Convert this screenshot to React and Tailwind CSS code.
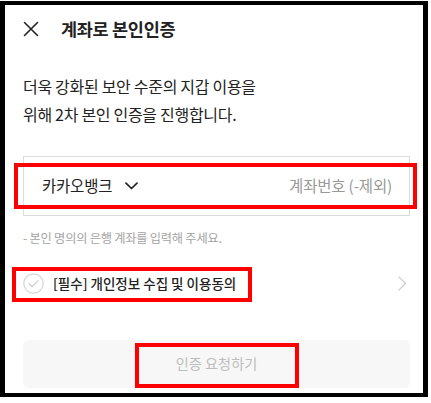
const font = { fontFamily: '"Noto Sans CJK KR", "Noto Sans", sans-serif' }

function CloseIcon() {
  return (
    <svg width="16" height="16" viewBox="0 0 16 16" fill="none" aria-hidden="true">
      <path d="M1.5 1.5 L14.5 14.5 M14.5 1.5 L1.5 14.5" stroke="#222" strokeWidth="1.6" strokeLinecap="round" />
    </svg>
  )
}

function ChevronDown() {
  return (
    <svg width="13" height="8" viewBox="0 0 13 8" fill="none" aria-hidden="true">
      <path d="M1 1.2 L6.5 6.5 L12 1.2" stroke="#222" strokeWidth="1.7" strokeLinecap="round" strokeLinejoin="round" />
    </svg>
  )
}

function CheckCircle() {
  return (
    <svg width="21" height="21" viewBox="0 0 21 21" fill="none" aria-hidden="true">
      <circle cx="10.5" cy="10.5" r="9.7" stroke="#d6d6d6" strokeWidth="1.2" />
      <path d="M6 10.8 L9.2 13.8 L15 7.6" stroke="#d0d0d0" strokeWidth="1.3" strokeLinecap="round" strokeLinejoin="round" />
    </svg>
  )
}

function ChevronRight() {
  return (
    <svg width="9" height="15" viewBox="0 0 9 15" fill="none" aria-hidden="true">
      <path d="M1 1 L7.5 7.5 L1 14" stroke="#cfcfcf" strokeWidth="1.3" strokeLinecap="round" strokeLinejoin="round" />
    </svg>
  )
}

export default function App() {
  return (
    <div className="h-[403px] w-[431px] bg-white pt-px" style={font}>
      <div className="relative h-[396px] w-[428px] border-y-4 border-x-[5px] border-black bg-white pl-[18px] pr-[13px]">
        {/* 헤더 */}
        <div className="flex h-[48px] items-center">
          <CloseIcon />
          <h1 className="ml-[22px] text-[17.5px] font-bold tracking-[-0.3px] text-[#222]">계좌로 본인인증</h1>
        </div>

        <p className="mt-[19px] text-[16px] leading-[28px] tracking-[-0.3px] text-[#222]">
          더욱 강화된 보안 수준의 지갑 이용을
          <br />
          위해 2차 본인 인증을 진행합니다.
        </p>

        {/* 계좌 입력 */}
        <div className="mt-[28px] flex h-[60px] items-center justify-between border border-[#dcdcdc] pl-[18px] pr-[17px]">
          <div className="flex items-center gap-[13px]">
            <span className="text-[15.5px] tracking-[-0.2px] text-[#222]">카카오뱅크</span>
            <ChevronDown />
          </div>
          <span className="text-[15.5px] tracking-[-0.2px] text-[#999]">계좌번호 (-제외)</span>
        </div>

        <p className="mt-[14px] text-[12.2px] leading-[16px] tracking-[-0.2px] text-[#a3a3a3]">- 본인 명의의 은행 계좌를 입력해 주세요.</p>

        {/* 약관 동의 */}
        <div className="mt-[27px] flex h-[20px] items-center justify-between pr-[3px]">
          <div className="flex items-center gap-[9px]">
            <CheckCircle />
            <span className="text-[13.5px] font-medium text-[#222]">[필수] 개인정보 수집 및 이용동의</span>
          </div>
          <ChevronRight />
        </div>

        <button
          type="button"
          disabled
          className="mt-[47px] flex h-[48px] w-full items-center justify-center rounded-[6px] bg-[#f7f7f7] text-[14.2px] text-[#bdbdbd]"
        >
          인증 요청하기
        </button>

        {/* 빨간 강조 박스 */}
        <div className="pointer-events-none absolute left-[9px] top-[158px] h-[46px] w-[403px] border-4 border-[#f00]" />
        <div className="pointer-events-none absolute left-[7px] top-[262px] h-[35px] w-[240px] border-4 border-[#f00]" />
        <div className="pointer-events-none absolute left-[130px] top-[338px] h-[45px] w-[164px] border-4 border-[#f00]" />
      </div>
    </div>
  )
}
